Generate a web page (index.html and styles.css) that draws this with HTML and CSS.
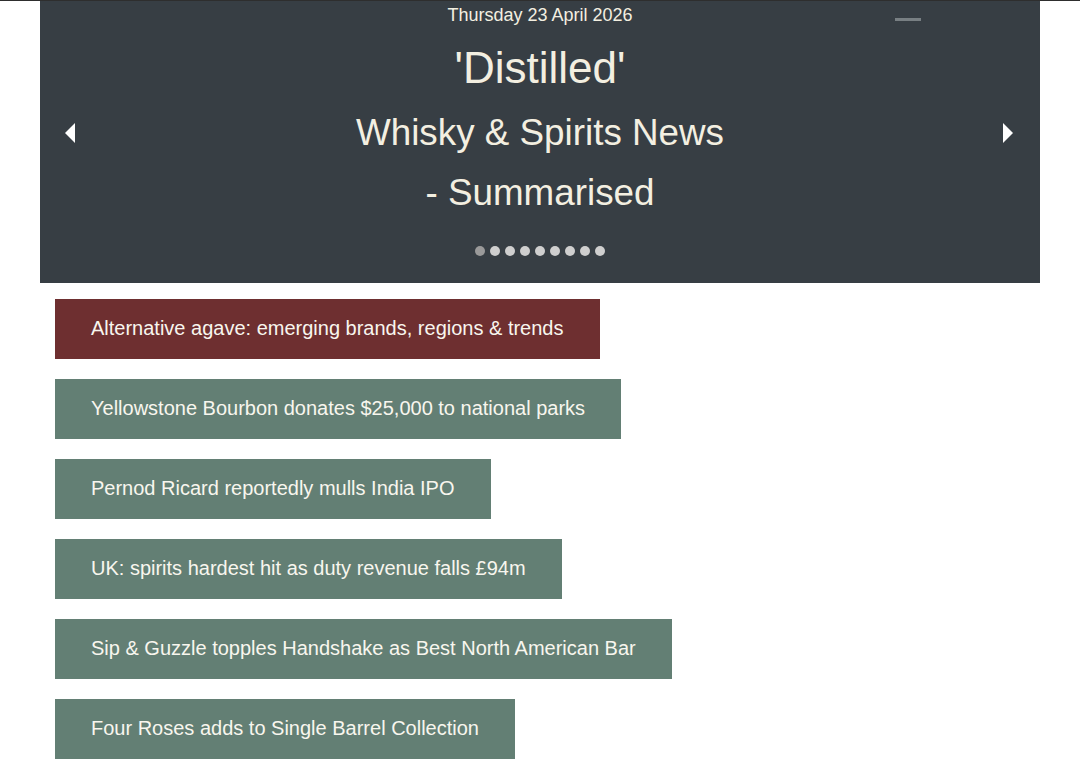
FILE: index.html
```html
<!DOCTYPE html>
<html lang="en">
<head>
    <meta charset="UTF-8">
    <meta name="viewport" content="width=device-width, initial-scale=1.0">
    <title>Distilled</title>
    <link rel="stylesheet" href="styles.css">
</head>
<body>
    <header class="banner">
        <div class="date">Thursday 23 April 2026</div>
        <h1 class="title">'Distilled'</h1>
        <p class="subtitle">Whisky &amp; Spirits News<br>- Summarised</p>
        <ul class="dots">
            <li class="current"></li>
            <li></li>
            <li></li>
            <li></li>
            <li></li>
            <li></li>
            <li></li>
            <li></li>
            <li></li>
        </ul>
        <div class="arrow-l"></div>
        <div class="arrow-r"></div>
        <div class="minimise"></div>
    </header>

    <!-- headlines -->
    <ul class="news">
        <li><a class="active" href="#">Alternative agave: emerging brands, regions &amp; trends</a></li>
        <li><a href="#">Yellowstone Bourbon donates $25,000 to national parks</a></li>
        <li><a href="#">Pernod Ricard reportedly mulls India IPO</a></li>
        <li><a href="#">UK: spirits hardest hit as duty revenue falls £94m</a></li>
        <li><a href="#">Sip &amp; Guzzle topples Handshake as Best North American Bar</a></li>
        <li><a href="#">Four Roses adds to Single Barrel Collection</a></li>
    </ul>
</body>
</html>
```

FILE: styles.css
```css
* {
    margin: 0;
    padding: 0;
}

body {
    border-top: 1px solid #2e2e2e;
    background: #fff;
    font-family: "Liberation Sans", Arial, sans-serif;
}

.banner {
    position: relative;
    display: flex;
    flex-direction: column;
    align-items: center;
    margin: 0 auto;
    width: 1000px;
    height: 282px;
    background: #373e44;
    color: #f3efe1;
}

.date {
    font-size: 18px;
    line-height: 28px;
}

.title {
    margin-top: 13px;
    font-size: 44px;
    font-weight: normal;
    line-height: 52px;
}

.subtitle {
    margin-top: 9px;
    font-size: 36.8px;
    line-height: 60px;
    text-align: center;
}

.dots {
    display: flex;
    gap: 5px;
    margin-top: 23px;
    list-style: none;
}

.dots li {
    width: 10px;
    height: 10px;
    border-radius: 50%;
    background: #cfcfcf;
    cursor: pointer;
}

.dots .current {
    background: #9a9a9a;
}

.arrow-l,
.arrow-r {
    position: absolute;
    top: 122px;
    width: 0;
    height: 0;
    border-top: 10px solid transparent;
    border-bottom: 10px solid transparent;
    cursor: pointer;
}

.arrow-l {
    left: 25px;
    border-right: 10px solid #fff;
}

.arrow-r {
    right: 27px;
    border-left: 10px solid #fff;
}

.minimise {
    position: absolute;
    top: 17px;
    left: 855px;
    width: 26px;
    height: 3px;
    background: #787f83;
}

.news {
    display: flex;
    flex-direction: column;
    align-items: flex-start;
    gap: 20px;
    padding: 16px 0 0 55px;
    list-style: none;
}

.news a {
    display: block;
    padding: 0 36px 1px;
    font-size: 20px;
    line-height: 59px;
    color: #f8f6ee;
    text-decoration: none;
    background: #637f74;
}

.news a.active {
    background: #6e2f30;
}
```
